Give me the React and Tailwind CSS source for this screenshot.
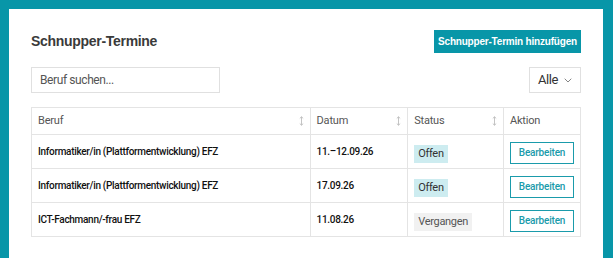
import React, { useState } from "react";

const rows = [
  { beruf: "Informatiker/in (Plattformentwicklung) EFZ", datum: "11.–12.09.26", status: "Offen" },
  { beruf: "Informatiker/in (Plattformentwicklung) EFZ", datum: "17.09.26", status: "Offen" },
  { beruf: "ICT-Fachmann/-frau EFZ", datum: "11.08.26", status: "Vergangen" },
];

function SortIcon() {
  return (
    <svg width="5" height="10" viewBox="0 0 5 10" fill="none" stroke="#bdbdbd" strokeWidth="0.9">
      <path d="M2.5 0.8 V9.2" />
      <path d="M0.8 2.4 L2.5 0.8 L4.2 2.4" />
      <path d="M0.8 7.6 L2.5 9.2 L4.2 7.6" />
    </svg>
  );
}

function HeadCell({ label, sortable, width }) {
  return (
    <th className={`${width} h-[27px] border border-[#e4e4e4] px-[6px] text-left font-normal text-[11px] text-[#555] tracking-[-0.2px]`}>
      <div className="flex items-center justify-between">
        <span>{label}</span>
        {sortable && <SortIcon />}
      </div>
    </th>
  );
}

export default function App() {
  const [search, setSearch] = useState("");

  return (
    <div className="min-h-[258px] bg-[#0896a8] pt-[9px] pl-[9px] pr-[10px] font-['Liberation_Sans',Arial,sans-serif]">
      <div className="min-h-[249px] bg-white px-[22px] pt-[21px] pb-[20px]">
        <div className="flex items-center justify-between">
          <h2 className="text-[14px] font-bold text-[#3a3a3a] tracking-[-0.3px]">Schnupper-Termine</h2>
          <button className="h-[23px] w-[147px] bg-[#0896a8] text-[10px] font-bold text-white tracking-[-0.2px]">
            Schnupper-Termin hinzufügen
          </button>
        </div>

        <div className="mt-[14px] flex items-center justify-between">
          <input
            value={search}
            onChange={(e) => setSearch(e.target.value)}
            placeholder="Beruf suchen..."
            className="h-[26px] w-[189px] border border-[#e0e0e0] px-[8px] font-['Roboto',sans-serif] text-[12px] tracking-[-0.4px] text-[#333] placeholder:text-[#555] outline-none"
          />
          <button className="flex h-[26px] w-[52px] items-center justify-center gap-[6px] border border-[#e0e0e0] font-['Roboto',sans-serif] text-[13px] tracking-[-0.4px] text-[#333]">
            Alle
            <svg width="8" height="5" viewBox="0 0 8 5" fill="none" stroke="#777" strokeWidth="0.9">
              <path d="M0.7 0.7 L4 4 L7.3 0.7" />
            </svg>
          </button>
        </div>

        <table className="mt-[14px] w-[550px] border-collapse font-['Roboto',sans-serif]">
          <thead>
            <tr>
              <HeadCell label="Beruf" sortable width="w-[280px]" />
              <HeadCell label="Datum" sortable width="w-[98px]" />
              <HeadCell label="Status" sortable width="w-[96px]" />
              <HeadCell label="Aktion" width="w-[76px]" />
            </tr>
          </thead>
          <tbody>
            {rows.map((r, i) => (
              <tr key={i} className="h-[34px]">
                <td className="border border-[#e4e4e4] px-[6px] text-[10px] font-medium tracking-[-0.3px] text-[#111]">{r.beruf}</td>
                <td className="border border-[#e4e4e4] px-[6px] text-[10px] font-medium tracking-[-0.3px] text-[#111]">{r.datum}</td>
                <td className="border border-[#e4e4e4] px-[6px]">
                  {r.status === "Offen" ? (
                    <span className="inline-block bg-[#cdecf0] px-[4px] py-[1px] text-[11px] tracking-[-0.3px] text-[#333]">Offen</span>
                  ) : (
                    <span className="inline-block bg-[#f1f1f1] px-[4px] py-[1px] text-[11px] tracking-[-0.3px] text-[#555]">Vergangen</span>
                  )}
                </td>
                <td className="border border-[#e4e4e4] px-[6px]">
                  <button className="h-[22px] w-[64px] border-[1.5px] border-[#1a9bab] text-[10px] font-medium tracking-[-0.2px] text-[#1a9bab]">
                    Bearbeiten
                  </button>
                </td>
              </tr>
            ))}
          </tbody>
        </table>
      </div>
    </div>
  );
}
